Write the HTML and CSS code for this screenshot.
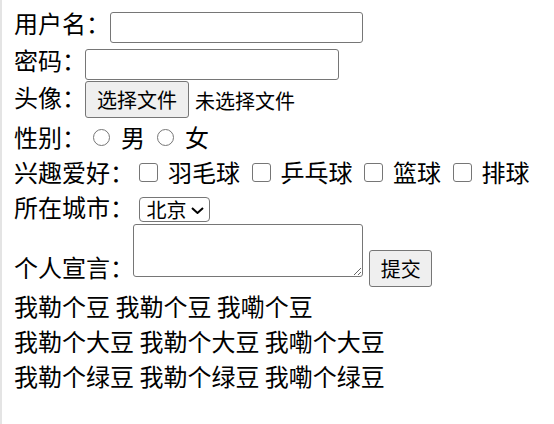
FILE: index.html
```html
<!DOCTYPE html>
<html lang="zh-CN" class="doc">
<head>
<meta charset="utf-8">
<title>表单</title>
<link rel="stylesheet" href="styles.css">
</head>
<body class="page">
<form class="form">
  <div class="row r1"><span class="lbl">用户名：</span><input class="field f-user" type="text"></div>
  <div class="row r2"><span class="lbl">密码：</span><input class="field f-pass" type="password"></div>
  <div class="row r3"><span class="lbl lbl-file">头像：</span><button type="button" class="btn btn-file">选择文件</button><span class="nofile">未选择文件</span></div>
  <div class="row r4"><span class="lbl">性别：</span><label class="opt opt-r"><input type="radio" name="sex" class="radio"><span class="lbl">男</span></label><label class="opt opt-r"><input type="radio" name="sex" class="radio"><span class="lbl">女</span></label></div>
  <div class="row r5"><span class="lbl">兴趣爱好：</span><label class="opt opt-c"><input type="checkbox" class="check"><span class="lbl">羽毛球</span></label><label class="opt opt-c"><input type="checkbox" class="check"><span class="lbl">乒乓球</span></label><label class="opt opt-c"><input type="checkbox" class="check"><span class="lbl">篮球</span></label><label class="opt opt-c"><input type="checkbox" class="check"><span class="lbl">排球</span></label></div>
  <div class="row r6"><span class="lbl">所在城市：</span><span class="sel"><select class="select"><option>北京</option><option>上海</option><option>广州</option></select><svg class="chev" viewBox="0 0 13 7" width="13" height="7"><path d="M1 1 L6.5 6 L12 1" fill="none" stroke="#000" stroke-width="2"/></svg></span></div>
  <div class="row r7"><span class="lbl lbl-say">个人宣言：</span><textarea class="area"></textarea><button type="submit" class="btn btn-submit">提交</button></div>
</form>
<div class="lines">
  <div class="line">我勒个豆 我勒个豆 我嘞个豆</div>
  <div class="line">我勒个大豆 我勒个大豆 我嘞个大豆</div>
  <div class="line">我勒个绿豆 我勒个绿豆 我嘞个绿豆</div>
</div>
</body>
</html>
```
FILE: styles.css
```css
.doc {
  height: 100%;
  border-left: 2px solid #e4e4e4;
  background: #fff;
}
.page {
  margin: 0;
  padding: 11px 0 0 12px;
  font-family: "Noto Sans CJK SC", "Noto Sans", sans-serif;
  font-size: 24px;
  color: #000;
}
.form {
  margin: 0;
}
.row {
  display: flex;
  align-items: flex-start;
}
.lbl {
  line-height: 24px;
  white-space: nowrap;
}
.r1 { height: 37px; }
.r2 { height: 33px; }
.r3 { height: 44px; }
.r4 { height: 35px; }
.r5 { height: 35px; }
.r6 { height: 29px; }
.r7 { height: 64px; }

.field {
  box-sizing: border-box;
  height: 31px;
  margin: 1px 0 0 0;
  padding: 1px 3px;
  border: 1px solid #767676;
  border-radius: 3px;
  background: #fff;
  font-family: inherit;
  font-size: 20px;
}
.f-user { width: 253px; }
.f-pass { width: 254px; margin-left: -1px; }

.btn {
  box-sizing: border-box;
  border: 1px solid #767676;
  border-radius: 3px;
  background: #efefef;
  color: #000;
  font-family: inherit;
  font-size: 20px;
  line-height: 20px;
  padding: 0;
}
.lbl-file { margin-top: 3.5px; }
.btn-file {
  width: 104px;
  height: 37px;
  margin-left: -1px;
}
.nofile {
  font-size: 20px;
  line-height: 20px;
  margin: 10px 0 0 6px;
}

.opt {
  display: flex;
  align-items: flex-start;
}
.opt-r + .opt-r { margin-left: 5px; }
.radio {
  appearance: none;
  box-sizing: border-box;
  width: 17px;
  height: 17px;
  margin: 4px 11.5px 0 6.5px;
  border: 1.5px solid #767676;
  border-radius: 50%;
  background: #fff;
}
.opt-c + .opt-c { margin-left: 6.5px; }
.check {
  appearance: none;
  box-sizing: border-box;
  width: 19px;
  height: 19px;
  margin: 2.5px 10px 0 5px;
  border: 1.5px solid #767676;
  border-radius: 3px;
  background: #fff;
}

.sel {
  position: relative;
  display: flex;
  margin: 2.3px 0 0 4.5px;
}
.select {
  appearance: none;
  box-sizing: border-box;
  width: 71px;
  height: 25px;
  margin: 0;
  padding: 0 0 0 7px;
  border: 1px solid #767676;
  border-radius: 4px;
  background: #fff;
  color: #000;
  font-family: inherit;
  font-size: 20px;
  line-height: 23px;
}
.chev {
  position: absolute;
  right: 6px;
  top: 9.5px;
  pointer-events: none;
}

.lbl-say { margin-top: 31px; }
.area {
  box-sizing: border-box;
  width: 230px;
  height: 53px;
  margin: 0 0 0 -0.7px;
  padding: 2px;
  border: 1px solid #767676;
  border-radius: 3px;
  font-family: inherit;
  font-size: 20px;
}
.btn-submit {
  width: 63px;
  height: 37px;
  margin: 26.3px 0 0 6px;
}

.lines {
  margin: 0;
}
.line {
  height: 35px;
  line-height: 35px;
  white-space: nowrap;
}
```
